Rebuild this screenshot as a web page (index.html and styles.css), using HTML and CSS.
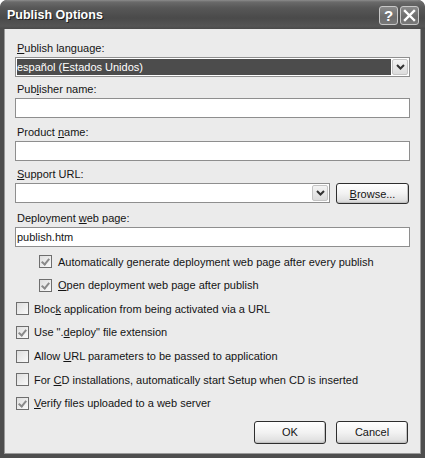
FILE: index.html
```html
<!DOCTYPE html>
<html>
<head>
<meta charset="utf-8">
<link rel="stylesheet" href="styles.css">
</head>
<body>
<div class="window">
  <div class="titlebar">
    <span class="title">Publish Options</span>
    <div class="tbtns">
      <span class="tbtn help">?</span>
      <span class="tbtn close"><svg width="13" height="13" viewBox="0 0 13 13"><path d="M2 2 L11 11 M11 2 L2 11" stroke="#fff" stroke-width="2.4" stroke-linecap="square"/></svg></span>
    </div>
  </div>
  <div class="content">
    <div class="field f1">
      <div class="label"><u>P</u>ublish language:</div>
      <div class="combo">
        <div class="combo-text selected">español (Estados Unidos)</div>
        <div class="arrow"><svg width="9" height="6" viewBox="0 0 9 6"><path d="M1 1 L4.5 4.5 L8 1" fill="none" stroke="#333" stroke-width="2"/></svg></div>
      </div>
    </div>
    <div class="field f2">
      <div class="label">Pub<u>l</u>isher name:</div>
      <div class="textbox"></div>
    </div>
    <div class="field f3">
      <div class="label">Product <u>n</u>ame:</div>
      <div class="textbox"></div>
    </div>
    <div class="field f4">
      <div class="label"><u>S</u>upport URL:</div>
      <div class="row-url">
        <div class="combo url">
          <div class="combo-text"></div>
          <div class="arrow"><svg width="9" height="6" viewBox="0 0 9 6"><path d="M1 1 L4.5 4.5 L8 1" fill="none" stroke="#333" stroke-width="2"/></svg></div>
        </div>
        <div class="btn browse"><u>B</u>rowse...</div>
      </div>
    </div>
    <div class="field f5">
      <div class="label">Deployment <u>w</u>eb page:</div>
      <div class="textbox">publish.htm</div>
    </div>
    <div class="checks">
      <div class="check indent"><span class="box on"></span><span>Automatically <u>g</u>enerate deployment web page after every publish</span></div>
      <div class="check indent"><span class="box on"></span><span><u>O</u>pen deployment web page after publish</span></div>
      <div class="check"><span class="box"></span><span>Bloc<u>k</u> application from being activated via a URL</span></div>
      <div class="check"><span class="box on"></span><span>Use ".<u>d</u>eploy" file extension</span></div>
      <div class="check"><span class="box"></span><span>Allow <u>U</u>RL parameters to be passed to application</span></div>
      <div class="check"><span class="box"></span><span>For <u>C</u>D installations, automatically start Setup when CD is inserted</span></div>
      <div class="check"><span class="box on"></span><span><u>V</u>erify files uploaded to a web server</span></div>
    </div>
    <div class="buttons">
      <div class="btn ok">OK</div>
      <div class="btn cancel">Cancel</div>
    </div>
  </div>
</div>
</body>
</html>
```

FILE: styles.css
```css
html, body {
  margin: 0;
  padding: 0;
  background: #ffffff;
}

.window {
  width: 425px;
  height: 458px;
  box-sizing: border-box;
  background: #4e4e4e;
  border-radius: 7px 7px 0 0;
  display: flex;
  flex-direction: column;
  font-family: "Liberation Sans", Arial, sans-serif;
  font-size: 11px;
  color: #141414;
  overflow: hidden;
}

.titlebar {
  height: 29px;
  flex: none;
  display: flex;
  align-items: center;
  justify-content: space-between;
  padding: 0 6px 0 7px;
  background: linear-gradient(#8c8c8c 0px, #6a6a6a 2px, #575757 8px, #4a4a4a 18px, #555555 26px, #4a4a4a 29px);
  border-radius: 7px 7px 0 0;
}

.title {
  color: #ffffff;
  font-weight: bold;
  font-size: 12.5px;
  text-shadow: 1px 1px 0 #1e1e1e;
  padding-top: 1px;
}

.tbtns {
  display: flex;
  gap: 2px;
  padding-top: 2px;
}

.tbtn {
  width: 17px;
  height: 17px;
  border: 1px solid #c8c8c8;
  border-radius: 3px;
  background: linear-gradient(#8a8a8a, #6c6c6c 60%, #7a7a7a);
  display: flex;
  align-items: center;
  justify-content: center;
  color: #fff;
  font-weight: bold;
  font-size: 15px;
  line-height: 17px;
}

.content {
  flex: 1;
  margin: 0 4px 4px 4px;
  background: #ebebeb;
  border-left: 1px solid #9a9a9a;
  border-right: 1px solid #9a9a9a;
  border-bottom: 1px solid #9a9a9a;
  padding: 12px 10px 0 10px;
  display: flex;
  flex-direction: column;
}

.field {
  display: flex;
  flex-direction: column;
}

.f2 { margin-top: 5px; }
.f3 { margin-top: 7px; }
.f4 { margin-top: 6px; }
.f5 { margin-top: 7px; }

.label {
  height: 14px;
  line-height: 14px;
  padding-left: 2px;
  margin-bottom: 2px;
}

.textbox {
  height: 20px;
  box-sizing: border-box;
  border: 1px solid #8e8e8e;
  background: #ffffff;
  line-height: 18px;
  padding-left: 1px;
}

.combo {
  height: 20px;
  box-sizing: border-box;
  border: 1px solid #8e8e8e;
  background: #ffffff;
  display: flex;
  padding: 1px;
  gap: 1px;
}

.combo-text {
  flex: 1;
  line-height: 16px;
  padding-left: 0;
}

.combo-text.selected {
  background: #4c4c4c;
  color: #ffffff;
}

.arrow {
  width: 16px;
  flex: none;
  box-sizing: border-box;
  border: 1px solid #c4c4c4;
  border-radius: 2px;
  background: linear-gradient(#f4f4f4, #dcdcdc);
  display: flex;
  align-items: center;
  justify-content: center;
}

.row-url {
  display: flex;
  gap: 6px;
  align-items: stretch;
}

.combo.url {
  width: 315px;
  flex: none;
}

.btn {
  box-sizing: border-box;
  border: 1px solid #2e2e2e;
  border-radius: 3px;
  background: linear-gradient(#ffffff, #f2f2f2 50%, #e2e2e2 85%, #cfcfcf);
  display: flex;
  align-items: center;
  justify-content: center;
  box-shadow: inset -1px -1px 0 #c2c2c2;
}

.browse {
  width: 73px;
  height: 21px;
}

.checks {
  margin-top: 8px;
  display: flex;
  flex-direction: column;
  gap: 10.67px;
}

.check {
  height: 13px;
  display: flex;
  align-items: center;
  gap: 5px;
  white-space: nowrap;
  padding-left: 1px;
}

.check.indent {
  padding-left: 24px;
  gap: 6px;
}

.box {
  width: 13px;
  height: 13px;
  flex: none;
  box-sizing: border-box;
  border: 1px solid #6e6e6e;
  background: linear-gradient(135deg, #dedede, #fafafa);
  position: relative;
}

.box.on::after {
  content: "";
  position: absolute;
  left: 3px;
  top: 1px;
  width: 3px;
  height: 6px;
  border-right: 2px solid #8a8a8a;
  border-bottom: 2px solid #8a8a8a;
  transform: rotate(40deg);
}

.buttons {
  margin-top: 11px;
  display: flex;
  justify-content: flex-end;
  gap: 10px;
  padding-right: 2px;
}

.ok, .cancel {
  width: 72px;
  height: 23px;
}
```
